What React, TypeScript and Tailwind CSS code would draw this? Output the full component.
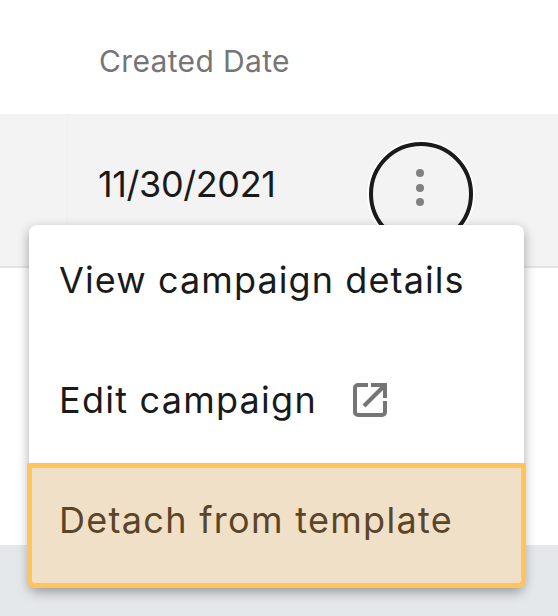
export default function App() {
  return (
    <div className="relative flex h-[616px] w-[558px] flex-col overflow-hidden bg-[#e5e8eb] font-['Inter',sans-serif]">
      <div className="flex h-[114px] items-center bg-white pl-[99px] pt-[8px]">
        <span className="text-[30px] tracking-[0.35px] text-[#757575]">Created Date</span>
      </div>
      <div className="flex h-[154px] border-b-[2px] border-[#e4e4e4] bg-[#f3f3f3]">
        <div className="h-full w-[68px] border-r border-[#efefef]" />
        <div className="flex w-[301px] items-start pl-[30px] pt-[46px]">
          <span className="text-[36px] leading-[48px] tracking-[-0.4px] text-[#1a1a1a]">11/30/2021</span>
        </div>
        <div className="mt-[28px] flex h-[104px] w-[104px] items-center justify-center rounded-full border-[4px] border-[#1a1a1a] shadow-[0_0_0_2px_#ffffff]">
          <svg width="12" height="42" viewBox="0 0 12 42" className="mb-[12px] mr-[2px]">
            <circle cx="6" cy="6" r="4" fill="#808080" />
            <circle cx="6" cy="21" r="4" fill="#808080" />
            <circle cx="6" cy="35" r="4" fill="#808080" />
          </svg>
        </div>
      </div>
      <div className="h-[277px] bg-white" />

      <div className="absolute left-[29px] top-[225px] w-[495px] rounded-[8px] bg-white text-[36px] shadow-[0_4px_12px_rgba(0,0,0,0.35)]">
        <div className="flex h-[119px] items-center pb-[10px] pl-[30px] tracking-[1.1px] text-[#1a1a1a]">
          View campaign details
        </div>
        <div className="flex h-[119px] items-center pb-[7px] pl-[30px] tracking-[1.25px] text-[#1a1a1a]">
          <span>Edit campaign</span>
          <svg width="34" height="34" viewBox="0 0 34 34" fill="none" className="ml-[36px]" stroke="#757575" strokeWidth="4">
            <path d="M15 2H5a3 3 0 0 0-3 3v24a3 3 0 0 0 3 3h24a3 3 0 0 0 3-3V18" />
            <path d="M18 2h14v13" />
            <path d="M32 2L11 23" />
          </svg>
        </div>
        <div className="-mx-[2px] flex h-[125px] items-center rounded-b-[8px] border-[5px] border-[#ffc45c] bg-[#f1e0c8] pb-[11px] pl-[27px] tracking-[1.3px] text-[#5a4528]">
          Detach from template
        </div>
      </div>
    </div>
  );
}
